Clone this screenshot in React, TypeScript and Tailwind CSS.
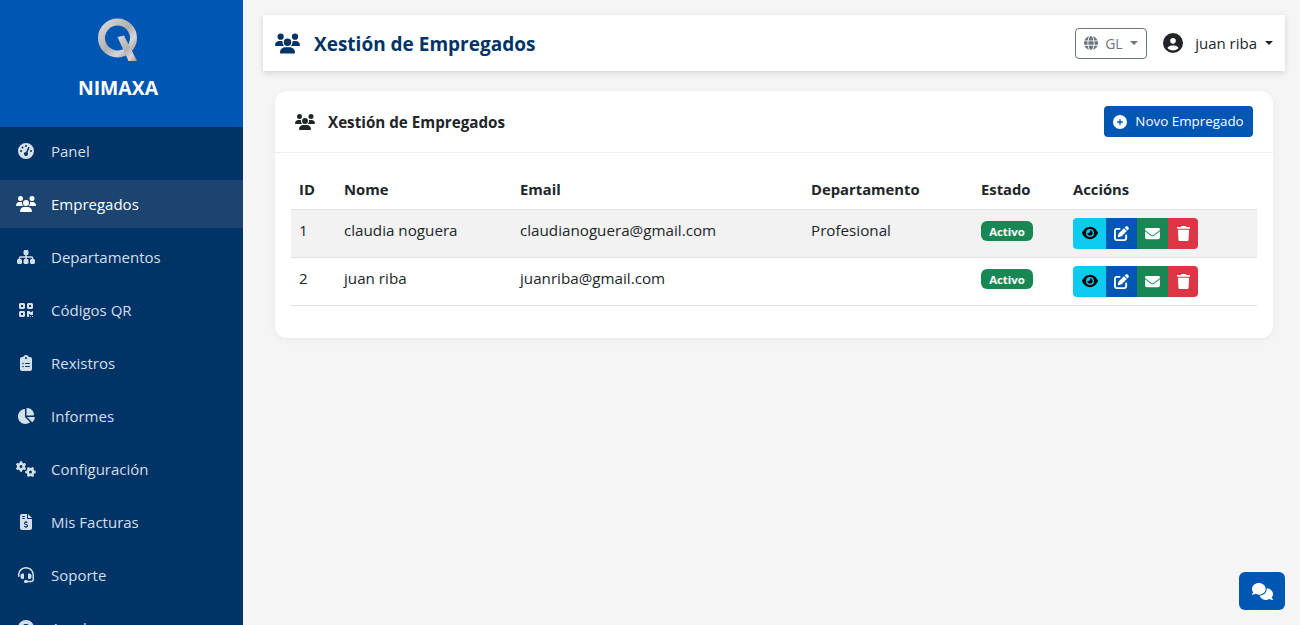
import {
  FaChartPie,
  FaCircleQuestion,
  FaCirclePlus,
  FaCircleUser,
  FaClipboardList,
  FaComments,
  FaEnvelope,
  FaEye,
  FaFileInvoiceDollar,
  FaGaugeHigh,
  FaGears,
  FaGlobe,
  FaHeadset,
  FaPenToSquare,
  FaQrcode,
  FaSitemap,
  FaTrash,
  FaUsers,
} from "react-icons/fa6";

const navItems = [
  { label: "Panel", icon: FaGaugeHigh, size: 16 },
  { label: "Empregados", icon: FaUsers, size: 20, active: true },
  { label: "Departamentos", icon: FaSitemap, size: 18 },
  { label: "Códigos QR", icon: FaQrcode, size: 16 },
  { label: "Rexistros", icon: FaClipboardList, size: 16 },
  { label: "Informes", icon: FaChartPie, size: 18 },
  { label: "Configuración", icon: FaGears, size: 20 },
  { label: "Mis Facturas", icon: FaFileInvoiceDollar, size: 16 },
  { label: "Soporte", icon: FaHeadset, size: 16 },
  { label: "Axuda", icon: FaCircleQuestion, size: 16 },
];

const employees = [
  { id: 1, name: "claudia noguera", email: "claudianoguera@gmail.com", dept: "Profesional", striped: true },
  { id: 2, name: "juan riba", email: "juanriba@gmail.com", dept: "", striped: false },
];

const Logo = () => (
  <svg width="40" height="44" viewBox="0 0 40 44" className="mb-[14px] mr-[7px]">
    <defs>
      <linearGradient id="q" x1="0" y1="0" x2="1" y2="1">
        <stop offset="0" stopColor="#d8d8d8" />
        <stop offset="0.5" stopColor="#b0b0b0" />
        <stop offset="0.75" stopColor="#d6d6d6" />
        <stop offset="1" stopColor="#9a9a9a" />
      </linearGradient>
    </defs>
    <circle cx="19.5" cy="20" r="16" fill="none" stroke="url(#q)" strokeWidth="7" />
    <path d="M19.5 19 L26 17.5 L39 43 L30.5 43 Z" fill="url(#q)" />
  </svg>
);

const Sidebar = () => (
  <aside className="w-[243px] shrink-0 h-full bg-[#003366] overflow-hidden">
    <div className="h-[127px] bg-[#0056b3] flex flex-col items-center pt-[18px]">
      <Logo />
      <div className="text-[19.4px] leading-[24px] font-bold text-white mr-[7px]">NIMAXA</div>
    </div>
    <nav className="flex flex-col gap-[5px]">
      {navItems.map((item) => (
        <a
          key={item.label}
          className={`h-[48px] shrink-0 flex items-center pl-[16px] text-[15px] ${
            item.active ? "bg-[#1c4470] text-white" : "text-[#d5dfea]"
          }`}
        >
          <span className="w-[20px] flex justify-center mr-[15px]">
            <item.icon size={item.size} />
          </span>
          {item.label}
        </a>
      ))}
    </nav>
  </aside>
);

const TopBar = () => (
  <header className="h-[56px] bg-white shadow-[0_2px_6px_rgba(0,0,0,0.14)] flex items-center pl-[12px] pr-[12px]">
    <FaUsers size={25} className="text-[#003366] mr-[14px]" />
    <h1 className="text-[19px] font-bold text-[#003366] pt-[2px]">Xestión de Empregados</h1>
    <div className="ml-auto flex items-center">
      <button className="h-[31px] w-[72px] rounded-[4px] border border-[#6c757d] text-[#6c757d] flex items-center pl-[8px] text-[14px]">
        <FaGlobe size={14} className="mr-[7px]" />
        GL
        <span className="ml-[7px] border-x-[4px] border-x-transparent border-t-[4px] border-t-[#6c757d]" />
      </button>
      <div className="ml-[16px] flex items-center text-[#212529] text-[15px]">
        <FaCircleUser size={20} className="mr-[12px]" />
        juan riba
        <span className="ml-[8px] border-x-[4.5px] border-x-transparent border-t-[4.5px] border-t-[#212529]" />
      </div>
    </div>
  </header>
);

const ActionButton = ({ className, children }: { className: string; children: React.ReactNode }) => (
  <button className={`h-[31px] flex items-center justify-center ${className}`}>{children}</button>
);

const EmployeesCard = () => (
  <section className="mt-[20px] mx-[12px] bg-white rounded-[12px] shadow-[0_2px_8px_rgba(0,0,0,0.05)] pb-[32px]">
    <div className="h-[62px] flex items-center pl-[20px] pr-[20px] border-b border-[#eeeeee]">
      <FaUsers size={20} className="text-[#212529] mr-[13px]" />
      <h2 className="text-[15.2px] font-bold text-[#212529] pt-[2px]">Xestión de Empregados</h2>
      <button className="ml-auto h-[31px] w-[149px] rounded-[4px] bg-[#0056b3] text-white text-[13.4px] flex items-center justify-center">
        <FaCirclePlus size={14} className="mr-[8px]" />
        Novo Empregado
      </button>
    </div>
    <div className="pt-[17px] px-[16px]">
      <table className="w-full border-collapse text-[15.2px] text-[#212529]">
        <thead>
          <tr className="h-[39px] border-b border-[#dee2e6] text-left text-[14.8px]">
            <th className="pl-[8px] w-[45px] font-bold">ID</th>
            <th className="pl-[8px] w-[176px] font-bold">Nome</th>
            <th className="pl-[8px] w-[291px] font-bold">Email</th>
            <th className="pl-[8px] w-[170px] font-bold">Departamento</th>
            <th className="pl-[8px] w-[92px] font-bold">Estado</th>
            <th className="pl-[8px] font-bold">Accións</th>
          </tr>
        </thead>
        <tbody>
          {employees.map((emp) => (
            <tr key={emp.id} className={`h-[48px] border-b border-[#dee2e6] ${emp.striped ? "bg-[#f2f2f2]" : ""}`}>
              <td className="pl-[8px] pb-[6px]">{emp.id}</td>
              <td className="pl-[8px] pb-[6px]">{emp.name}</td>
              <td className="pl-[8px] pb-[6px]">{emp.email}</td>
              <td className="pl-[8px] pb-[6px]">{emp.dept}</td>
              <td className="pl-[8px] pb-[6px]">
                <span className="inline-flex h-[20px] w-[52px] items-center justify-center rounded-[6px] bg-[#198754] text-white text-[11.4px] font-bold">
                  Activo
                </span>
              </td>
              <td className="pl-[8px]">
                <div className="flex overflow-hidden rounded-[4px] w-[125px]">
                  <ActionButton className="w-[33px] bg-[#0dcaf0] text-black"><FaEye size={16} /></ActionButton>
                  <ActionButton className="w-[31px] bg-[#0056b3] text-white"><FaPenToSquare size={15} /></ActionButton>
                  <ActionButton className="w-[31px] bg-[#198754] text-white"><FaEnvelope size={15} /></ActionButton>
                  <ActionButton className="w-[30px] bg-[#dc3545] text-white"><FaTrash size={15} /></ActionButton>
                </div>
              </td>
            </tr>
          ))}
        </tbody>
      </table>
    </div>
  </section>
);

export default function App() {
  return (
    <div className="relative h-[625px] w-full flex overflow-hidden bg-[#f5f5f5] font-['Open_Sans','Liberation_Sans',sans-serif]">
      <Sidebar />
      <main className="flex-1 pt-[15px] pl-[20px] pr-[15px]">
        <TopBar />
        <EmployeesCard />
      </main>
      <button className="absolute right-[15px] bottom-[15px] w-[46px] h-[38px] rounded-[6px] bg-[#0056b3] text-white flex items-center justify-center">
        <FaComments size={21} />
      </button>
    </div>
  );
}
